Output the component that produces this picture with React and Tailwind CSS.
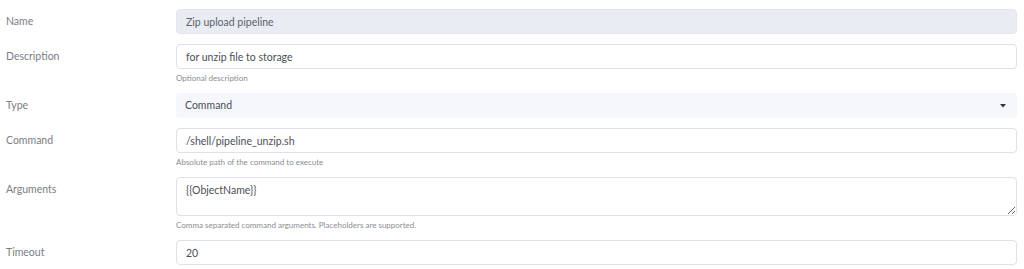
import React from 'react'

const font = { fontFamily: 'Lato, "Open Sans", sans-serif' }

function Row({ label, help, children }) {
  return (
    <div className="flex mb-[10px]">
      <div className="w-[176px] shrink-0 pl-[6px] pt-[5px] text-[10.5px] leading-[15px] text-[#7a7d85]">{label}</div>
      <div className="flex-1">
        {children}
        {help && <p className="pt-[4px] text-[8px] leading-[10px] text-[#8a8d94]">{help}</p>}
      </div>
    </div>
  )
}

const inputCls = 'block w-full h-[25px] px-[9px] rounded-[4px] text-[10.5px] text-[#4b4f58] outline-none'

export default function App() {
  return (
    <div className="bg-white w-[1024px] h-[269px] overflow-hidden pt-[9px] pr-[7px]" style={font}>
      <Row label="Name">
        <input readOnly value="Zip upload pipeline" className={`${inputCls} bg-[#e9ecf3] border border-[#e3e6ee] text-[#5d616b]`} style={font} />
      </Row>
      <Row label="Description" help="Optional description">
        <input readOnly value="for unzip file to storage" className={`${inputCls} bg-white border border-[#dfe1ea]`} style={font} />
      </Row>
      <Row label="Type">
        <div className={`${inputCls} bg-[#f6f7fb] flex items-center justify-between`}>
          <span>Command</span>
          <svg width="6" height="4" viewBox="0 0 6 4" className="mr-[2px]"><path d="M0 0h6L3 3.5z" fill="#333" /></svg>
        </div>
      </Row>
      <Row label="Command" help="Absolute path of the command to execute">
        <input readOnly value="/shell/pipeline_unzip.sh" className={`${inputCls} bg-white border border-[#dfe1ea]`} style={font} />
      </Row>
      <Row label="Arguments" help="Comma separated command arguments. Placeholders are supported.">
        <textarea readOnly value="{{ObjectName}}" className="block w-full h-[39px] px-[9px] py-[5px] rounded-[4px] bg-white border border-[#dfe1ea] text-[10.5px] text-[#4b4f58] outline-none resize-y" style={font} />
      </Row>
      <Row label="Timeout">
        <input readOnly value="20" className={`${inputCls} bg-white border border-[#dfe1ea]`} style={font} />
      </Row>
    </div>
  )
}
